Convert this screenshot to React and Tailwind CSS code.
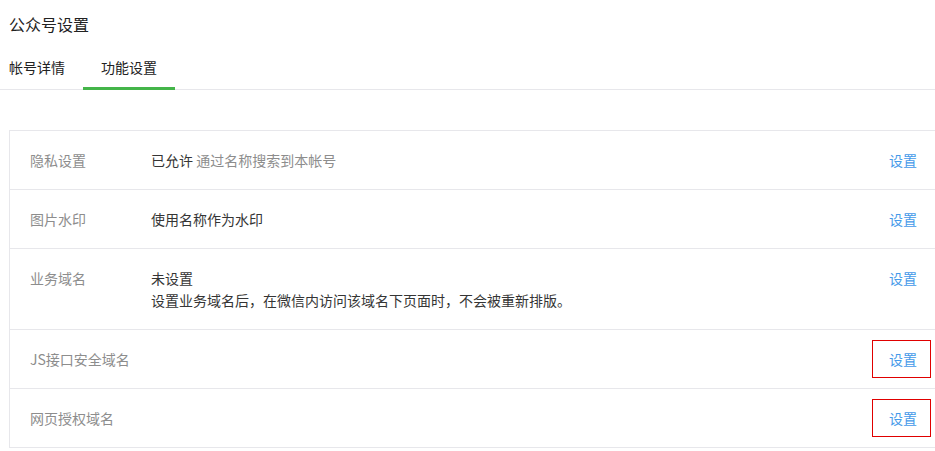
const rows = [
  { label: '隐私设置', value: (<><span className="text-[#353535]">已允许</span> <span className="text-[#8d8d8d]">通过名称搜索到本帐号</span></>) },
  { label: '图片水印', value: <span className="text-[#353535]">使用名称作为水印</span> },
  {
    label: '业务域名',
    value: (
      <div className="text-[#353535]">
        <div>未设置</div>
        <div>设置业务域名后，在微信内访问该域名下页面时，不会被重新排版。</div>
      </div>
    ),
  },
  { label: 'JS接口安全域名', marked: true },
  { label: '网页授权域名', marked: true },
];

export default function App() {
  return (
    <div className="w-[935px] h-[451px] bg-white overflow-hidden text-[14px] leading-[22px]" style={{ fontFamily: '"Microsoft YaHei", "Noto Sans CJK SC", sans-serif' }}>
      <div className="pl-[9px] pt-[12px] text-[16px] leading-[24px] text-[#222]">公众号设置</div>

      <div className="mt-[20px] flex border-b border-[#e7e7eb] text-[#222]">
        <div className="ml-[9px] pb-[11px]">帐号详情</div>
        <div className="ml-[18px] w-[92px] text-center pb-[9px] border-b-[3px] border-[#44b549] -mb-px">功能设置</div>
      </div>

      <div className="mt-[40px] ml-[9px] border-l border-t border-[#e7e7eb]">
        {rows.map((r) => (
          <div key={r.label} className="flex border-b border-[#e7e7eb] py-[18px]">
            <div className="w-[120px] pl-[20px] text-[#8d8d8d] shrink-0">{r.label}</div>
            <div className="ml-[21px] flex-1">{r.value}</div>
            <div className="relative mr-[18px] shrink-0">
              <a className="text-[#459ae9] cursor-pointer">设置</a>
              {r.marked && (
                <div className="absolute left-[-17px] right-[-14px] top-[-8px] bottom-[-8px] border-[1.5px] border-[#e00000]" />
              )}
            </div>
          </div>
        ))}
      </div>
    </div>
  );
}
